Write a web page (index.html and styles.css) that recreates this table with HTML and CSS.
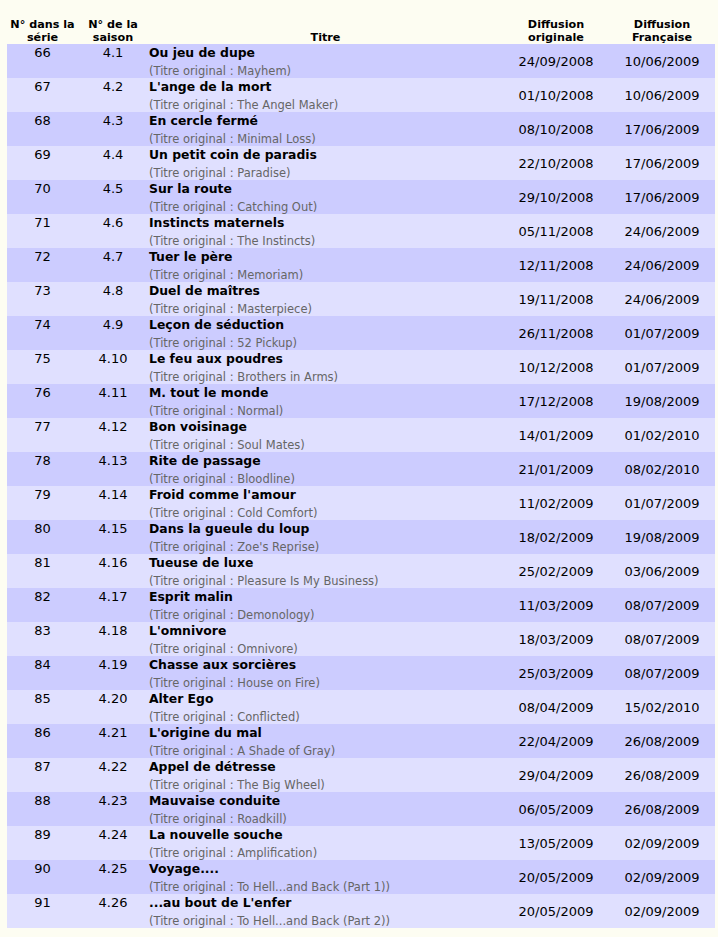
FILE: index.html
```html
<!DOCTYPE html>
<html lang="fr">
<head>
<meta charset="utf-8">
<title>Épisodes saison 4</title>
<link rel="stylesheet" href="styles.css">
</head>
<body>
<table class="episodes">
<colgroup>
<col class="c-num"><col class="c-season"><col class="c-title"><col class="c-date"><col class="c-date">
</colgroup>
<thead>
<tr><th>N° dans la série</th><th>N° de la saison</th><th>Titre</th><th>Diffusion originale</th><th>Diffusion Française</th></tr>
</thead>
<tbody>
<tr class="dark"><td class="num">66</td><td class="num">4.1</td><td class="title"><b>Ou jeu de dupe</b><span class="orig">(Titre original : Mayhem)</span></td><td class="date">24/09/2008</td><td class="date">10/06/2009</td></tr>
<tr class="light"><td class="num">67</td><td class="num">4.2</td><td class="title"><b>L'ange de la mort</b><span class="orig">(Titre original : The Angel Maker)</span></td><td class="date">01/10/2008</td><td class="date">10/06/2009</td></tr>
<tr class="dark"><td class="num">68</td><td class="num">4.3</td><td class="title"><b>En cercle fermé</b><span class="orig">(Titre original : Minimal Loss)</span></td><td class="date">08/10/2008</td><td class="date">17/06/2009</td></tr>
<tr class="light"><td class="num">69</td><td class="num">4.4</td><td class="title"><b>Un petit coin de paradis</b><span class="orig">(Titre original : Paradise)</span></td><td class="date">22/10/2008</td><td class="date">17/06/2009</td></tr>
<tr class="dark"><td class="num">70</td><td class="num">4.5</td><td class="title"><b>Sur la route</b><span class="orig">(Titre original : Catching Out)</span></td><td class="date">29/10/2008</td><td class="date">17/06/2009</td></tr>
<tr class="light"><td class="num">71</td><td class="num">4.6</td><td class="title"><b>Instincts maternels</b><span class="orig">(Titre original : The Instincts)</span></td><td class="date">05/11/2008</td><td class="date">24/06/2009</td></tr>
<tr class="dark"><td class="num">72</td><td class="num">4.7</td><td class="title"><b>Tuer le père</b><span class="orig">(Titre original : Memoriam)</span></td><td class="date">12/11/2008</td><td class="date">24/06/2009</td></tr>
<tr class="light"><td class="num">73</td><td class="num">4.8</td><td class="title"><b>Duel de maîtres</b><span class="orig">(Titre original : Masterpiece)</span></td><td class="date">19/11/2008</td><td class="date">24/06/2009</td></tr>
<tr class="dark"><td class="num">74</td><td class="num">4.9</td><td class="title"><b>Leçon de séduction</b><span class="orig">(Titre original : 52 Pickup)</span></td><td class="date">26/11/2008</td><td class="date">01/07/2009</td></tr>
<tr class="light"><td class="num">75</td><td class="num">4.10</td><td class="title"><b>Le feu aux poudres</b><span class="orig">(Titre original : Brothers in Arms)</span></td><td class="date">10/12/2008</td><td class="date">01/07/2009</td></tr>
<tr class="dark"><td class="num">76</td><td class="num">4.11</td><td class="title"><b>M. tout le monde</b><span class="orig">(Titre original : Normal)</span></td><td class="date">17/12/2008</td><td class="date">19/08/2009</td></tr>
<tr class="light"><td class="num">77</td><td class="num">4.12</td><td class="title"><b>Bon voisinage</b><span class="orig">(Titre original : Soul Mates)</span></td><td class="date">14/01/2009</td><td class="date">01/02/2010</td></tr>
<tr class="dark"><td class="num">78</td><td class="num">4.13</td><td class="title"><b>Rite de passage</b><span class="orig">(Titre original : Bloodline)</span></td><td class="date">21/01/2009</td><td class="date">08/02/2010</td></tr>
<tr class="light"><td class="num">79</td><td class="num">4.14</td><td class="title"><b>Froid comme l'amour</b><span class="orig">(Titre original : Cold Comfort)</span></td><td class="date">11/02/2009</td><td class="date">01/07/2009</td></tr>
<tr class="dark"><td class="num">80</td><td class="num">4.15</td><td class="title"><b>Dans la gueule du loup</b><span class="orig">(Titre original : Zoe's Reprise)</span></td><td class="date">18/02/2009</td><td class="date">19/08/2009</td></tr>
<tr class="light"><td class="num">81</td><td class="num">4.16</td><td class="title"><b>Tueuse de luxe</b><span class="orig">(Titre original : Pleasure Is My Business)</span></td><td class="date">25/02/2009</td><td class="date">03/06/2009</td></tr>
<tr class="dark"><td class="num">82</td><td class="num">4.17</td><td class="title"><b>Esprit malin</b><span class="orig">(Titre original : Demonology)</span></td><td class="date">11/03/2009</td><td class="date">08/07/2009</td></tr>
<tr class="light"><td class="num">83</td><td class="num">4.18</td><td class="title"><b>L'omnivore</b><span class="orig">(Titre original : Omnivore)</span></td><td class="date">18/03/2009</td><td class="date">08/07/2009</td></tr>
<tr class="dark"><td class="num">84</td><td class="num">4.19</td><td class="title"><b>Chasse aux sorcières</b><span class="orig">(Titre original : House on Fire)</span></td><td class="date">25/03/2009</td><td class="date">08/07/2009</td></tr>
<tr class="light"><td class="num">85</td><td class="num">4.20</td><td class="title"><b>Alter Ego</b><span class="orig">(Titre original : Conflicted)</span></td><td class="date">08/04/2009</td><td class="date">15/02/2010</td></tr>
<tr class="dark"><td class="num">86</td><td class="num">4.21</td><td class="title"><b>L'origine du mal</b><span class="orig">(Titre original : A Shade of Gray)</span></td><td class="date">22/04/2009</td><td class="date">26/08/2009</td></tr>
<tr class="light"><td class="num">87</td><td class="num">4.22</td><td class="title"><b>Appel de détresse</b><span class="orig">(Titre original : The Big Wheel)</span></td><td class="date">29/04/2009</td><td class="date">26/08/2009</td></tr>
<tr class="dark"><td class="num">88</td><td class="num">4.23</td><td class="title"><b>Mauvaise conduite</b><span class="orig">(Titre original : Roadkill)</span></td><td class="date">06/05/2009</td><td class="date">26/08/2009</td></tr>
<tr class="light"><td class="num">89</td><td class="num">4.24</td><td class="title"><b>La nouvelle souche</b><span class="orig">(Titre original : Amplification)</span></td><td class="date">13/05/2009</td><td class="date">02/09/2009</td></tr>
<tr class="dark"><td class="num">90</td><td class="num">4.25</td><td class="title"><b>Voyage....</b><span class="orig">(Titre original : To Hell...and Back (Part 1))</span></td><td class="date">20/05/2009</td><td class="date">02/09/2009</td></tr>
<tr class="light"><td class="num">91</td><td class="num">4.26</td><td class="title"><b>...au bout de L'enfer</b><span class="orig">(Titre original : To Hell...and Back (Part 2))</span></td><td class="date">20/05/2009</td><td class="date">02/09/2009</td></tr>
</tbody>
</table>
</body>
</html>
```
FILE: styles.css
```css
html, body {
  margin: 0;
  padding: 0;
  background: #fdfdf2;
}
body {
  padding: 14px 3px 0 7px;
  font-family: "DejaVu Sans", Verdana, sans-serif;
  color: #000;
}
.episodes {
  width: 708px;
  border-collapse: collapse;
  table-layout: fixed;
}
.c-num { width: 71px; }
.c-season { width: 70px; }
.c-title { width: 355px; }
.c-date { width: 106px; }
.episodes th {
  font-size: 11.2px;
  line-height: 13px;
  font-weight: bold;
  height: 30px;
  padding: 0;
  vertical-align: bottom;
  text-align: center;
}
.episodes td {
  padding: 0;
  height: 34px;
  font-size: 13px;
  line-height: 16px;
}
.dark { background: #ccccff; }
.light { background: #e0e0ff; }
.episodes td.num {
  text-align: center;
  vertical-align: top;
  line-height: 18px;
}
.episodes td.title {
  vertical-align: top;
  padding-left: 1px;
}
.title b {
  display: block;
  height: 16px;
  margin-top: 1px;
  font-size: 12.4px;
  line-height: 16px;
}
.orig {
  display: block;
  height: 15px;
  font-size: 11.5px;
  line-height: 16px;
  margin-top: 2px;
  color: #666;
}
.episodes td.date {
  text-align: center;
  vertical-align: middle;
  height: 32px;
  padding-top: 2px;
}
```
